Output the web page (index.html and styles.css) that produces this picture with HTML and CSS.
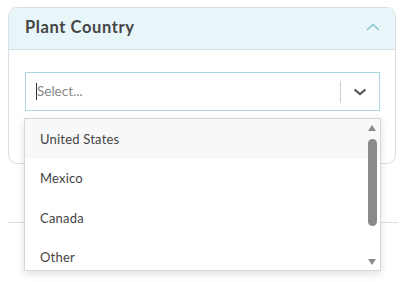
FILE: index.html
```html
<!DOCTYPE html>
<html>
<head>
<meta charset="utf-8">
<link rel="stylesheet" href="styles.css">
</head>
<body>
<div class="page">
  <section class="card">
    <header class="card-head">
      <h2 class="title">Plant Country</h2>
      <svg class="chev-up" width="14" height="8" viewBox="0 0 14 8"><path d="M1 7 L7 1.5 L13 7" fill="none" stroke="#7fc3cf" stroke-width="1.3"/></svg>
    </header>
    <div class="card-body">
      <div class="select">
        <div class="value"><span class="caret"></span><span class="placeholder">Select...</span></div>
        <span class="sep"></span>
        <svg class="chev-down" width="14" height="8" viewBox="0 0 14 8"><path d="M1.5 1.5 L7 6 L12.5 1.5" fill="none" stroke="#555" stroke-width="2.2"/></svg>
      </div>
    </div>
  </section>
  <div class="next-line"></div>
  <div class="menu">
    <ul class="options">
      <li class="opt hover">United States</li>
      <li class="opt">Mexico</li>
      <li class="opt">Canada</li>
      <li class="opt">Other</li>
    </ul>
    <div class="scrollbar">
      <span class="arrow up"></span>
      <span class="thumb"></span>
      <span class="arrow down"></span>
    </div>
  </div>
</div>
</body>
</html>
```
FILE: styles.css
```css
* { box-sizing: border-box; }
html, body { margin: 0; padding: 0; background: #fff; }
body { font-family: "Lato", "Noto Sans", sans-serif; color: #444; }
.page { position: relative; width: 404px; height: 282px; padding: 7px 8px 0 8px; }
.card { border: 1px solid #dcdfe2; border-radius: 9px; overflow: hidden; height: 157px; }
.card-head { height: 42px; background: #e9f6f9; border-bottom: 1px solid #d3dfe3; display: flex; align-items: center; justify-content: space-between; padding: 0 15px 3px 16px; }
.title { margin: 0; font-size: 16.5px; font-weight: 700; color: #444; letter-spacing: 0.6px; }
.chev-up { display: block; margin-top: -1px; }
.card-body { padding: 22px 15px 0 16px; }
.select { height: 39px; border: 1.5px solid #a9d6e1; display: flex; align-items: center; padding: 0 10px 0 10px; }
.value { flex: 1; display: flex; align-items: center; }
.caret { width: 1px; height: 17px; background: #333; }
.placeholder { font-size: 13.5px; color: #888; margin-top: -1px; }
.sep { width: 1px; height: 22px; background: #d0d0d0; margin-right: 12px; }
.chev-down { display: block; margin-right: 2px; }
.next-line { position: absolute; left: 8px; right: 6px; top: 222px; height: 1px; background: #e2e2e2; }
.menu { position: absolute; left: 24px; top: 118px; width: 357px; height: 153px; background: #fff; border: 1px solid #d8d8d8; box-shadow: 0 3px 8px rgba(0,0,0,0.12); overflow: hidden; }
.options { list-style: none; margin: 0; padding: 0; }
.opt { height: 39.5px; display: flex; align-items: center; padding-left: 15px; font-size: 13px; color: #444; letter-spacing: 0.2px; }
.opt.hover { background: #f8f8f8; }
.scrollbar { position: absolute; right: 3px; top: 0; bottom: 0; width: 10px; }
.thumb { position: absolute; left: 0.5px; top: 20px; width: 9px; height: 87px; border-radius: 5px; background: #8a8a8a; }
.arrow { position: absolute; left: 0.5px; width: 0; height: 0; border-left: 4.5px solid transparent; border-right: 4.5px solid transparent; }
.arrow.up { top: 6px; border-bottom: 6px solid #8a8a8a; }
.arrow.down { bottom: 5px; border-top: 6px solid #8a8a8a; }
```
